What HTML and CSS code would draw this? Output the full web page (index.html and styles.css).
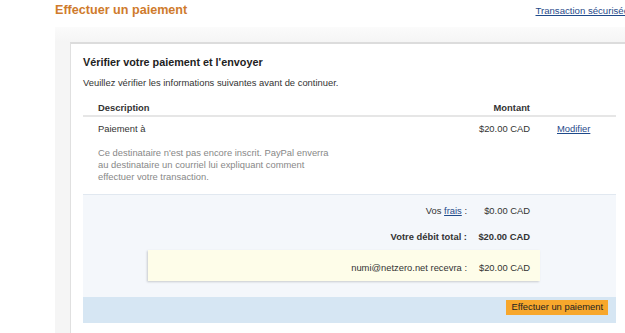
FILE: index.html
```html
<!DOCTYPE html>
<html lang="fr">
<head>
    <meta charset="UTF-8">
    <meta name="viewport" content="width=device-width, initial-scale=1.0">
    <title>Effectuer un paiement</title>
    <link rel="stylesheet" href="styles.css">
</head>
<body>
    <div class="page">
        <div class="page__header">
            <h1 class="page__title">Effectuer un paiement</h1>
            <a class="page__secure" href="#">Transaction sécurisée</a>
        </div>
        <div class="frame">
            <div class="panel">
                <h2 class="panel__title">Vérifier votre paiement et l'envoyer</h2>
                <p class="panel__intro">Veuillez vérifier les informations suivantes avant de continuer.</p>

                <table class="items">
                    <thead>
                        <tr>
                            <th class="items__desc">Description</th>
                            <th class="items__amount">Montant</th>
                            <th class="items__action"></th>
                        </tr>
                    </thead>
                    <tbody>
                        <tr>
                            <td class="items__desc">
                                Paiement à
                                <p class="items__note">Ce destinataire n'est pas encore inscrit. PayPal enverra au destinataire un courriel lui expliquant comment effectuer votre transaction.</p>
                            </td>
                            <td class="items__amount">$20.00 CAD</td>
                            <td class="items__action"><a href="#">Modifier</a></td>
                        </tr>
                    </tbody>
                </table>

                <div class="summary">
                    <div class="summary__row">
                        <span class="summary__label">Vos <a href="#">frais</a> :</span>
                        <span class="summary__value">$0.00 CAD</span>
                    </div>
                    <div class="summary__row summary__row--total">
                        <span class="summary__label">Votre débit total :</span>
                        <span class="summary__value">$20.00 CAD</span>
                    </div>
                    <div class="summary__receive">
                        <span class="summary__label">numi@netzero.net recevra :</span>
                        <span class="summary__value">$20.00 CAD</span>
                    </div>
                </div>

                <div class="actions">
                    <button class="actions__button">Effectuer un paiement</button>
                </div>
            </div>
        </div>
    </div>
</body>
</html>
```

FILE: styles.css
```css
html, body {
    overflow: hidden;
}
body {
    margin: 0;
    font-family: "Liberation Sans", Arial, sans-serif;
    font-size: 9.4px;
    color: #333;
    background: #fff;
}
a {
    color: #1f4a8a;
}
.page {
    width: 585px;
    padding-left: 55px;
}
.page__header {
    display: flex;
    justify-content: space-between;
    align-items: baseline;
    padding-top: 3px;
    padding-right: 11px;
}
.page__title {
    margin: 0;
    font-size: 12.6px;
    line-height: 15px;
    color: #cf7b2c;
}
.page__secure {
    font-size: 9.6px;
    white-space: nowrap;
}
.frame {
    margin-top: 9px;
    padding: 15px 0 0 15px;
    background: linear-gradient(to bottom, #fbfbfb, #f5f5f5 15px);
}
.panel {
    background: #fff;
    border-top: 2px solid #dcdcdc;
    border-left: 1px solid #e0e0e0;
    padding: 11px 12px 20px 12px;
}
.panel__title {
    margin: 0;
    font-size: 10.8px;
    line-height: 14px;
    color: #222;
}
.panel__intro {
    margin: 8px 0 0;
    line-height: 12px;
}
.items {
    width: 533px;
    margin-top: 13px;
    border-collapse: collapse;
}
.items th {
    padding: 0 0 1px;
    line-height: 12px;
    border-bottom: 2px solid #e6e6e6;
}
.items td {
    padding: 6px 0 0;
    line-height: 12px;
    vertical-align: top;
}
.items .items__desc {
    padding-left: 15px;
    text-align: left;
}
.items .items__amount {
    width: 90px;
    text-align: right;
}
.items .items__action {
    width: 59px;
    padding-left: 27px;
    text-align: left;
}
.items__note {
    max-width: 240px;
    margin: 12px 0 11px;
    color: #888;
}
.summary {
    width: 533px;
    padding: 10px 0 16px;
    background: #f4f7fb;
    border-top: 1px solid #e1e8f0;
}
.summary__row,
.summary__receive {
    display: grid;
    grid-template-columns: 1fr 63px;
    line-height: 12px;
}
.summary__row {
    padding-right: 86px;
}
.summary__row + .summary__row {
    margin-top: 14px;
}
.summary__row--total {
    font-weight: bold;
}
.summary__label {
    text-align: right;
}
.summary__value {
    text-align: right;
}
.summary__receive {
    margin: 7px 76px 0 65px;
    padding: 12px 10px 7px 0;
    background: #fefde9;
    box-shadow: -1px 1px 2px rgba(0, 0, 0, 0.18);
}
.actions {
    display: flex;
    justify-content: flex-end;
    width: 533px;
    padding: 3px 0 8px;
    background: #d6e6f3;
}
.actions__button {
    margin-right: 8px;
    padding: 1px 5px 2px;
    border: none;
    background: #f7a72c;
    font-family: "Liberation Sans", Arial, sans-serif;
    font-size: 9.4px;
    line-height: 12px;
    color: #222;
}
```
